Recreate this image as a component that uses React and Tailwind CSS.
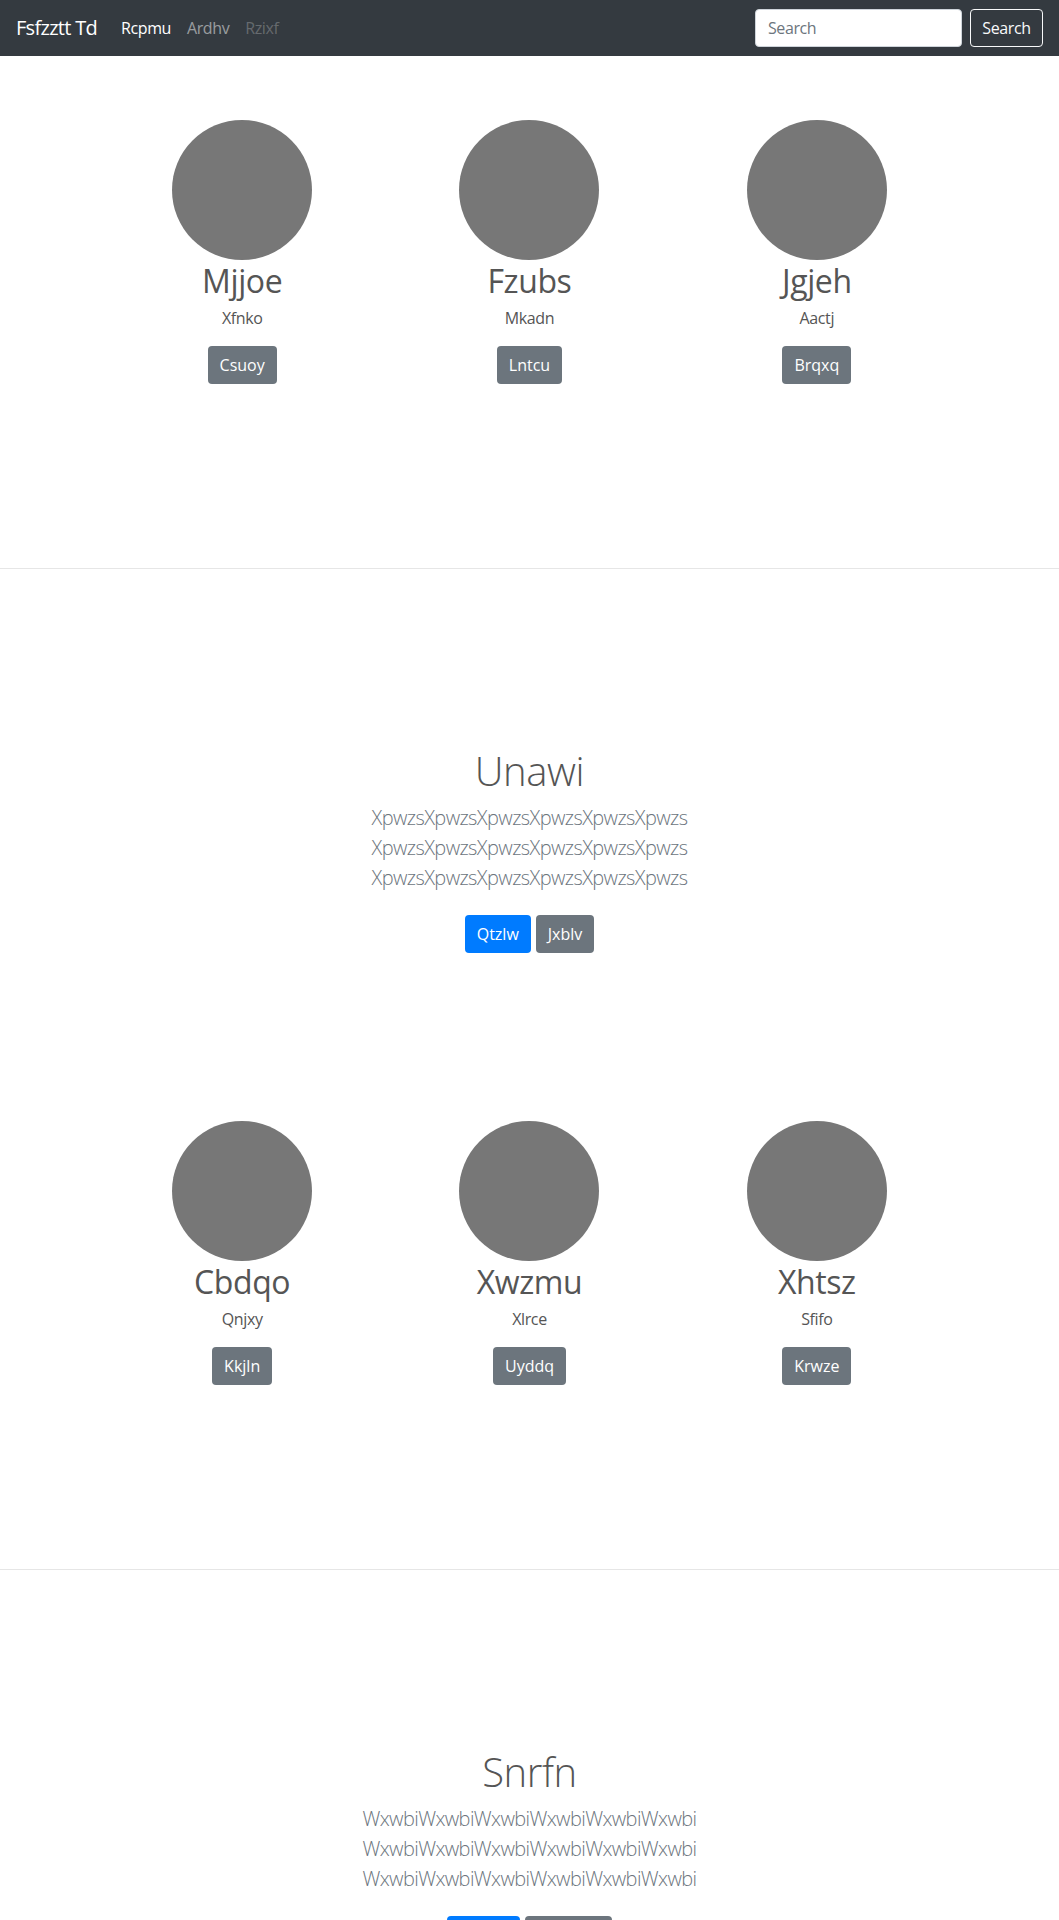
const font = { fontFamily: '"Segoe UI", "Open Sans", "Liberation Sans", sans-serif' };

const rows = [
    {
        people: [
            { name: "Mjjoe", sub: "Xfnko", action: "Csuoy" },
            { name: "Fzubs", sub: "Mkadn", action: "Lntcu" },
            { name: "Jgjeh", sub: "Aactj", action: "Brqxq" },
        ],
        title: "Unawi",
        word: "Xpwzs",
        primary: "Qtzlw",
        secondary: "Jxblv",
    },
    {
        people: [
            { name: "Cbdqo", sub: "Qnjxy", action: "Kkjln" },
            { name: "Xwzmu", sub: "Xlrce", action: "Uyddq" },
            { name: "Xhtsz", sub: "Sfifo", action: "Krwze" },
        ],
        title: "Snrfn",
        word: "Wxwbi",
        primary: "Hmvrk",
        secondary: "Dpwoqn",
    },
];

const Navbar = () => (
    <nav className="h-[56px] bg-[#343a40] flex items-center px-4">
        <a className="text-[20px] leading-[30px] text-white mr-4 tracking-[-0.035em]" href="#">Fsfzztt Td</a>
        <ul className="flex items-center">
            <li><a className="block px-2 text-[16px] leading-6 text-white" href="#">Rcpmu</a></li>
            <li><a className="block px-2 text-[16px] leading-6 text-white/50" href="#">Ardhv</a></li>
            <li><span className="block px-2 text-[16px] leading-6 text-white/25">Rzixf</span></li>
        </ul>
        <form className="ml-auto flex items-center" onSubmit={(e) => e.preventDefault()}>
            <input
                className="w-[207px] h-[38px] mr-2 px-3 bg-white border border-[#ced4da] rounded text-[16px] text-[#495057] placeholder:text-[#6c757d] outline-none"
                type="search"
                placeholder="Search"
            />
            <button className="h-[38px] w-[73px] border border-[#f8f9fa] rounded text-[16px] text-[#f8f9fa]" type="submit">
                Search
            </button>
        </form>
    </nav>
);

const Person = ({ name, sub, action }) => (
    <div className="flex flex-col items-center">
        <div className="w-[140px] h-[140px] rounded-full bg-[#777777]"></div>
        <h2 className="pt-[2px] text-[32px] leading-[38px] font-normal text-[#555555] mb-[6px]">{name}</h2>
        <p className="text-[16px] leading-6 text-[#555555] mb-4">{sub}</p>
        <button className="h-[38px] px-3 rounded bg-[#6c757d] text-white text-[16px] tracking-normal" type="button">{action}</button>
    </div>
);

const Block = ({ row }) => (
    <>
        <section className="pt-16 pb-[184px]">
            <div className="w-[862px] mx-auto grid grid-cols-3">
                {row.people.map((p) => <Person key={p.name} {...p} />)}
            </div>
        </section>
        <hr className="border-0 h-px bg-[#e6e6e6]" />
        <section className="pt-[178px] pb-[104px] text-center">
            <h1 className="text-[40px] leading-[48px] font-light text-[#555555] mb-2">{row.title}</h1>
            <div className="text-[20px] leading-[30px] font-light text-[#6c757d] mb-4 tracking-[-0.03em]">
                {[0, 1, 2].map((i) => <div key={i}>{row.word.repeat(6)}</div>)}
            </div>
            <div className="flex justify-center gap-[5px] pt-[6px]">
                <button className="h-[38px] px-3 rounded bg-[#007bff] text-white text-[16px] tracking-normal" type="button">{row.primary}</button>
                <button className="h-[38px] px-3 rounded bg-[#6c757d] text-white text-[16px] tracking-normal" type="button">{row.secondary}</button>
            </div>
        </section>
    </>
);

export default function App() {
    return (
        <div className="bg-white min-h-screen tracking-[-0.025em]" style={font}>
            <Navbar />
            {rows.map((row) => <Block key={row.title} row={row} />)}
        </div>
    );
}
